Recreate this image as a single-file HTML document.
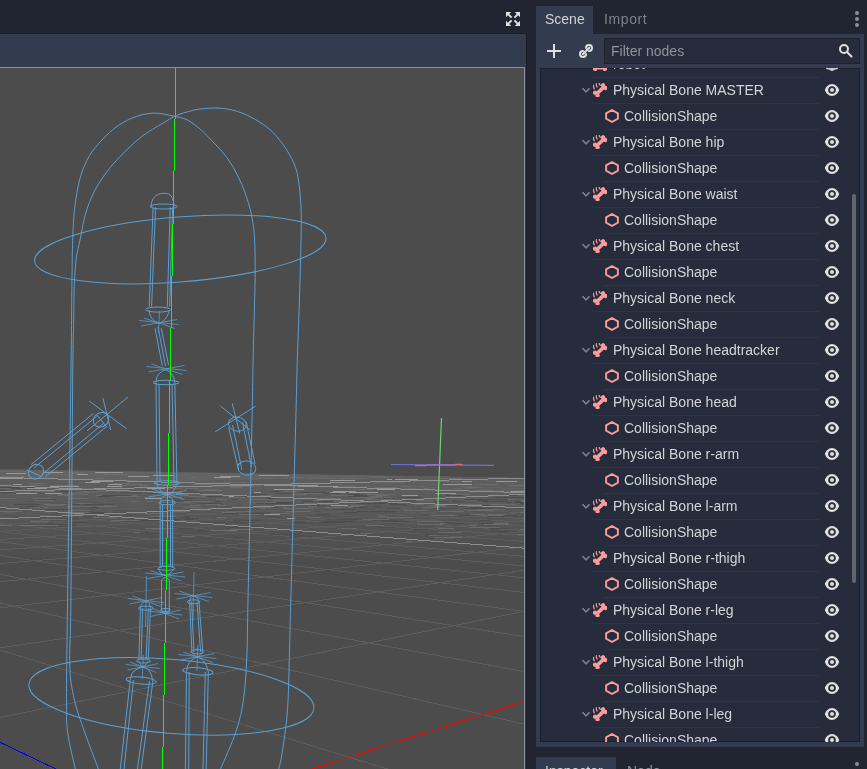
<!DOCTYPE html>
<html><head><meta charset="utf-8">
<style>
*{margin:0;padding:0;box-sizing:border-box}
html,body{width:867px;height:769px;overflow:hidden;background:#202531;font-family:"Liberation Sans",sans-serif;font-size:14px;color:#d2d4d8}
.abs{position:absolute;will-change:transform}
#vphead{position:absolute;left:0;top:34px;width:526px;height:34px;background:#333b4f}
#vp{position:absolute;left:0;top:67px;width:525px;height:702px;background:#4c4c4c;border-top:1px solid #8b919c;border-right:1px solid #8b919c}
#vpb{position:absolute;left:525px;top:34px;width:1px;height:735px;background:#333b4f}
#vpd{position:absolute;left:526px;top:34px;width:1px;height:735px;background:#1a1d28}
#dock{position:absolute;left:536px;top:34px;width:328px;height:713px;background:#333b4f}
#scenetab{position:absolute;left:536px;top:6px;width:57px;height:28px;background:#333b4f}
#filter{position:absolute;left:604px;top:38px;width:256px;height:26px;background:#262c3b;box-shadow:inset 0 0 0 1px #1e222c}
#tree{position:absolute;left:540px;top:68px;width:320px;height:674px;background:#262c3b;overflow:hidden;box-shadow:inset 0 0 0 1px #1c2029}
.row{position:absolute;left:0;width:320px;height:27px}
.row .t{position:absolute;top:0;line-height:26px;white-space:nowrap;will-change:transform}
.row svg{position:absolute}
.sep{position:absolute;height:1px;background:#2f3544}
#sb{position:absolute;left:852px;top:194px;width:4px;height:389px;border-radius:2px;background:#5f6571}
.dots i{position:absolute;width:4px;height:4px;border-radius:2px;background:#8b8e96}
</style></head><body>
<svg width="0" height="0" style="position:absolute">
<defs>
<g id="bone"><g fill="#fc9c9c" transform="translate(7.3 7.4) rotate(-43)"><rect x="-5.5" y="-1.75" width="11" height="3.5"/><circle cx="-5.5" cy="-1.9" r="2.1"/><circle cx="-5.5" cy="1.9" r="2.1"/><circle cx="5.5" cy="-1.9" r="2.1"/><circle cx="5.5" cy="1.9" r="2.1"/></g><path fill="none" stroke="#fc9c9c" stroke-width="1.25" stroke-linecap="round" d="M0.5 2.3 Q0.3 3.9 1.2 5.6 M3.3 0.7 Q3.1 2.4 4.1 4 M6.2 0.3 Q6.2 1.4 7.2 2.3"/></g><path fill="none" stroke="#fc9c9c" stroke-width="1.3" stroke-linecap="round" d="M0.6 2.4 Q0.4 4 1.5 6 M3.4 0.8 Q3.2 2.6 4.4 4.4 M6.3 0.4 Q6.3 1.6 7.6 2.6"/></g><path fill="none" stroke="#fc9c9c" stroke-width="1.2" stroke-linecap="round" d="M0.7 2.6 Q0.9 4.5 1.6 5.8 M3.6 1.1 Q3.8 3 4.6 4.3 M6.6 0.4 Q6.9 1.8 7.7 2.8"/></g>
<g id="hex"><path fill="none" stroke="#fc9c9c" stroke-width="1.9" stroke-linejoin="round" d="M7 1 L12.9 4.4 L12.9 9.6 L7 13 L1.1 9.6 L1.1 4.4 Z"/></g>
<g id="eye"><path fill="#e0e0e0" fill-rule="evenodd" d="M7 0 C10.6 0 13.3 3.2 14.2 6 C13.3 8.8 10.6 12 7 12 C3.4 12 0.7 8.8 -0.2 6 C0.7 3.2 3.4 0 7 0Z M7 2.2 A3.8 3.8 0 1 0 7 9.8 A3.8 3.8 0 1 0 7 2.2Z"/><circle cx="7" cy="6" r="2" fill="#e0e0e0"/></g>
</defs></svg>

<!-- expand icon -->
<svg class="abs" style="left:505px;top:11px" width="16" height="16" viewBox="0 0 16 16">
<g fill="#e0e0e0"><path d="M1 1h5.2l-1.9 1.9 3 3-1.4 1.4-3-3L1 6.2z"/><path d="M15 1h-5.2l1.9 1.9-3 3 1.4 1.4 3-3L15 6.2z"/><path d="M1 15h5.2l-1.9-1.9 3-3-1.4-1.4-3 3L1 9.8z"/><path d="M15 15h-5.2l1.9-1.9-3-3 1.4-1.4 3 3L15 9.8z"/></g></svg>

<div id="vphead"></div><div class="abs" style="left:0;top:33px;width:526px;height:1px;background:#1a1d28"></div>
<div id="vp"></div><svg width="524" height="769" viewBox="0 0 524 769" style="position:absolute;left:0;top:0"><defs><clipPath id="vc"><rect x="0" y="68" width="524" height="701"/></clipPath><linearGradient id="band" gradientUnits="userSpaceOnUse" x1="0" y1="486.3" x2="0" y2="564.3"><stop offset="0" stop-color="#5c5c5c"/><stop offset="1" stop-color="#4c4c4c"/></linearGradient></defs><g clip-path="url(#vc)"><rect x="0" y="68" width="524" height="701" fill="#4c4c4c"/><path d="M0 469.3 L524 477.9 L524 769 L0 769Z" fill="url(#band)"/><path d="M0 469.3 L524 477.9 L524 494.9 L0 486.3Z" fill="#636363"/><path d="M0 650L387.6 769M0 602.9L524 724.1M0 574.4L524 671.6M0 555.4L524 636.5M0 541.7L524 611.4M0 531.5L524 592.5M0 523.5L524 577.7M0 517.1L524 565.9M0 511.8L524 556.3M0 503.8L524 541.4M0 500.6L524 535.5M0 497.8L524 530.5M0 495.4L524 526M0 493.3L524 522.1M0 491.4L524 518.6M0 489.7L524 515.5M0 488.2L524 512.7M0 486.8L524 510.1M0 484.4L524 505.7M0 483.3L524 503.8M0 482.4L524 502M0 481.5L524 500.3M0 480.7L524 498.8M0 479.9L524 497.4M0 479.2L524 496.1M0 478.5L524 494.9M0 477.9L524 493.7M0 717.5L524 611.4M0 647.9L524 570.3M0 607.8L524 546.7M0 581.7L524 531.4M0 563.5L524 520.6M0 549.9L524 512.6M0 539.5L524 506.5M0 531.2L524 501.6M0 524.5L524 497.6M0 514.2L524 491.6M0 510.2L524 489.2M0 506.7L524 487.2M0 503.7L524 485.4M0 501L524 483.8M0 498.6L524 482.4M0 496.5L524 481.2M0 494.6L524 480M0 492.9L524 479M0 489.9L507.6 477.7M0 488.6L487.9 477.4M0 487.5L468.8 477M0 486.4L450.3 476.7M0 485.3L432.5 476.4" stroke="#5d5d5d" stroke-width="1" fill="none" shape-rendering="crispEdges"/><path d="M0 487.5h20M26 487.5h29M11 488.5h11M67 489.5h26M0 490.5h6M85 490.5h12M146 490.5h14M168 490.5h12M181 490.5h12M60 491.5h15M271 491.5h9M0 492.5h15M120 492.5h23M183 492.5h17M300 492.5h25M145 493.5h13M176 493.5h27M275 493.5h18M324 493.5h16M250 494.5h17M348 494.5h12M102 495.5h29M354 495.5h13M446 495.5h17M498 495.5h20M97 496.5h14M207 496.5h16M242 496.5h6M348 496.5h20M283 497.5h8M397 497.5h25M494 497.5h30M167 498.5h27M266 498.5h9M377 498.5h18M38 499.5h18M232 499.5h5M464 499.5h20M486 499.5h21M169 500.5h23M406 500.5h10M477 500.5h11M159 501.5h22M215 501.5h6M302 501.5h12M319 501.5h14M434 501.5h7M442 501.5h7M452 501.5h13M483 501.5h25M515 501.5h6M277 502.5h17M379 502.5h17M507 502.5h5M514 502.5h25M161 503.5h17M200 503.5h22M256 503.5h8M265 503.5h26M356 503.5h29M389 503.5h8M520 503.5h8M14 504.5h26M73 504.5h7M84 504.5h30M390 504.5h16M310 505.5h16M447 505.5h11M482 505.5h10M25 506.5h14M375 506.5h6M458 506.5h8M89 507.5h10M273 507.5h6M353 507.5h15M469 507.5h13M0 508.5h29M248 508.5h5M387 508.5h14M433 508.5h25M465 508.5h30M497 508.5h26M44 509.5h27M162 509.5h8M332 509.5h23M157 510.5h14M228 510.5h18M315 511.5h5M357 511.5h11M369 511.5h27M92 512.5h14M113 512.5h18M344 512.5h13M81 513.5h27M223 513.5h11M242 513.5h28M316 514.5h13M125 515.5h7M423 515.5h5M459 515.5h15M505 515.5h13M521 515.5h29M38 516.5h28M266 516.5h13M487 516.5h19M513 516.5h9M18 517.5h28M84 517.5h7M153 517.5h23M180 517.5h10M56 518.5h23M186 518.5h13M67 519.5h6M158 519.5h12M172 519.5h7M184 519.5h9M336 519.5h22M141 520.5h20M163 520.5h9M233 520.5h27M373 520.5h24M479 520.5h12M123 521.5h9M324 521.5h30M382 521.5h27M68 522.5h18M204 522.5h21M231 522.5h24M294 522.5h20M319 522.5h26M448 523.5h16M478 523.5h15M523 523.5h11M46 524.5h30M166 524.5h11M239 526.5h22M229 527.5h27M378 527.5h16M177 528.5h16M489 528.5h16M413 529.5h16M196 530.5h11M489 531.5h28M501 532.5h7M142 533.5h26M269 534.5h27M425 534.5h19M290 536.5h22M227 537.5h17" stroke="#4d4d4d" stroke-width="1"/><path d="M0 471.5h28M67 472.5h15M72 473.5h14M89 473.5h21M45 474.5h25M104 474.5h25M0 476.5h25M190 477.5h8M285 477.5h16M369 477.5h20M93 478.5h11M257 478.5h17M307 478.5h29M339 478.5h28M439 478.5h23M92 480.5h21M118 480.5h19M438 481.5h22M223 482.5h26M375 482.5h30M29 483.5h15M113 483.5h17M125 484.5h18M191 484.5h20M475 484.5h24M30 485.5h13M49 485.5h28M119 485.5h8M139 485.5h10M209 485.5h21M233 485.5h29M508 485.5h21M212 486.5h13M230 486.5h24M290 486.5h10M338 486.5h17M401 486.5h10M418 486.5h6M230 487.5h12M374 487.5h23M465 487.5h17M0 488.5h11M80 488.5h25M168 488.5h14M185 488.5h13M404 488.5h12M424 488.5h5M455 488.5h6M204 489.5h15M349 489.5h24M105 490.5h9M198 490.5h24M473 490.5h21M522 490.5h13M35 491.5h19M83 491.5h26M115 491.5h24M139 491.5h11M152 491.5h6M285 491.5h12M19 492.5h12M69 492.5h21M165 492.5h17M501 492.5h24M301 493.5h20M58 494.5h30M203 494.5h6M210 494.5h6M291 494.5h16M366 494.5h29M451 494.5h19M57 495.5h12M96 495.5h6M132 495.5h5M202 495.5h22M260 495.5h13M331 495.5h22M375 495.5h14M116 496.5h24M189 496.5h16M370 496.5h13M466 496.5h25M144 497.5h23M167 497.5h15M228 497.5h17M356 497.5h19M375 497.5h18M452 497.5h12M0 498.5h15M33 498.5h18M69 498.5h20M300 498.5h14M315 498.5h27M364 498.5h9M216 499.5h11M249 499.5h20M367 499.5h27M508 499.5h5M35 500.5h19M273 500.5h22M313 500.5h9M416 500.5h17M520 500.5h20M131 501.5h8M147 501.5h6M184 501.5h26M333 501.5h15M522 501.5h22M161 502.5h30M249 502.5h27M355 502.5h18M77 503.5h15M304 503.5h23M44 504.5h22M206 504.5h14M320 504.5h12M415 504.5h9M460 504.5h22M490 504.5h26M46 505.5h18M104 505.5h7M190 505.5h10M218 505.5h8M351 505.5h13M427 505.5h18M67 506.5h26M96 506.5h22M308 506.5h9M344 506.5h15M434 506.5h13M468 506.5h23M33 507.5h7M43 507.5h5M183 507.5h19M249 507.5h22M282 507.5h5M324 507.5h19M348 507.5h5M422 507.5h16M208 508.5h6M260 508.5h6M284 508.5h30M478 509.5h27M70 510.5h20M404 510.5h24M467 510.5h27M0 511.5h22M146 511.5h6M154 511.5h12M173 511.5h17M226 511.5h24M286 511.5h25M440 511.5h24M63 512.5h26M222 512.5h13M520 512.5h26M66 513.5h7M145 513.5h21M270 513.5h20M75 514.5h23M239 514.5h22M470 514.5h14M488 514.5h17M431 515.5h24M482 515.5h21M150 516.5h26M378 516.5h8M93 517.5h24M135 517.5h9M217 517.5h10M307 517.5h14M387 517.5h27M523 518.5h26M41 519.5h25M363 519.5h26M111 520.5h28M30 521.5h19M417 521.5h25M440 523.5h5M494 523.5h15M417 524.5h26M484 524.5h24M0 525.5h12M19 525.5h24M43 525.5h16M366 525.5h18M469 525.5h7M470 527.5h30M145 528.5h27M342 528.5h15M438 528.5h16M230 529.5h23M520 529.5h12M211 530.5h26M134 532.5h6M438 532.5h23M361 533.5h11M517 534.5h22M429 535.5h8M182 536.5h12M434 537.5h28M406 541.5h6" stroke="#6b6b6b" stroke-width="1"/><path d="M43 472.5h20M95 472.5h28M6 473.5h20M77 474.5h11M153 475.5h21M259 475.5h30M128 476.5h21M220 476.5h20M214 477.5h17M0 478.5h23M73 479.5h5M387 479.5h5M395 479.5h23M330 480.5h25M91 481.5h22M462 481.5h10M496 481.5h21M85 482.5h15M13 484.5h9M108 484.5h14M443 484.5h29M294 485.5h24M50 486.5h29M107 486.5h15M308 486.5h30M27 488.5h20M147 488.5h18M274 489.5h30M377 489.5h18M435 490.5h18M333 491.5h23M511 491.5h20M254 492.5h7M330 492.5h16M349 492.5h29M16 493.5h21M45 493.5h17M436 493.5h20M402 495.5h16M229 496.5h5M145 498.5h17M331 505.5h17M264 514.5h16M287 518.5h8" stroke="#999" stroke-width="1"/><path d="M0 507.5L524 548.2M0 485.5L524 507.8M0 477.3L524 492.6M0 518.9L524 494.3M0 491.4L524 478.1" stroke="#8e8e8e" stroke-width="1" fill="none" shape-rendering="crispEdges"/><path d="M310 769.5 L525 701" stroke="#f00" stroke-width="1" fill="none" shape-rendering="crispEdges"/><path d="M0 742.3 L57 769.5" stroke="#00f" stroke-width="1" fill="none" shape-rendering="crispEdges"/><g stroke="#5b9fd3" stroke-width="1" fill="none"><path d="M75.3 769C74 762.8 69.1 743.9 67.6 731.9C66.1 719.9 66.5 718.7 66.5 696.7C66.5 674.7 66.8 654.5 67.6 600C68.3 545.5 70.3 422.6 71 370C71.7 317.4 71.6 306.3 71.9 284.6C72.2 262.9 72.2 252.6 72.7 240C73.2 227.4 73.4 219.5 74.6 209.2C75.8 198.9 77.6 187.1 80 178.3C82.4 169.5 85.4 162.8 89.1 156.4C92.8 150 97 145.2 101.9 140C106.8 134.8 112.5 129.4 118.3 125.5C124.1 121.6 130.4 118.5 136.5 116.4C142.6 114.3 148.6 113.2 154.7 113.1C160.8 113 167.4 114.8 172.9 116C178.4 117.2 182.9 117.8 187.4 120C191.9 122.2 196.5 126.2 200 129C203.5 131.8 203.8 132.2 208.2 136.9C212.6 141.6 221.2 149.9 226.4 156.9C231.6 163.9 235.5 171.1 239.2 178.7C242.8 186.3 246 195.1 248.3 202.4C250.6 209.7 251.8 216.1 252.8 222.4C253.9 228.7 254.2 232.1 254.6 240C255 247.9 255.2 258.7 255.2 270C255.2 281.3 254.8 293 254.4 308C254.1 323 253.5 339.7 253.1 360C252.7 380.3 252.7 390 251.8 430C251 470 248.8 562.5 248 600C247.2 637.5 247.6 638.4 246.9 654.9C246.2 671.4 245.4 686 243.6 698.8C241.8 711.6 239.8 720.1 235.9 731.8C232.1 743.5 223.1 762.8 220.5 769 M98.4 769C95.8 762.1 87 739.2 83 727.5C79 715.8 76.4 709.2 74.2 699C72 688.8 70.3 682.5 69.8 666C69.2 649.5 70.4 649.3 70.9 600C71.4 550.7 72.3 416.5 72.8 370C73.3 323.5 73.5 335.2 73.7 321C74 306.8 73.8 295.2 74.3 284.6C74.8 274 75.5 264.7 76.4 257.3C77.4 249.9 78.5 247.2 80 240C81.5 232.8 83.2 222 85.5 214C87.8 206 90.6 198.8 94 192C97.4 185.2 101.4 179.2 106 173C110.6 166.8 115.5 161.1 121.5 155C127.5 148.9 135.2 141.6 141.9 136.4C148.7 131.2 156.2 127.2 162 123.7C167.8 120.2 171.8 117.6 176.5 115.5C181.2 113.4 185.9 112.3 190 111.2C194.1 110.1 196.1 109.4 200.9 108.9C205.8 108.4 213 107.7 219.1 108.1C225.2 108.5 231.2 109.5 237.3 111.4C243.4 113.3 249.7 116.3 255.5 119.6C261.3 122.9 266.7 126.4 271.9 131.4C277.1 136.4 282.6 143.5 286.5 149.6C290.4 155.7 293.5 161.7 295.6 167.8C297.7 173.9 298.3 179.3 299.2 186C300.1 192.7 300.7 200.6 301 207.9C301.3 215.2 301.4 217.7 301.2 230C301 242.3 300.6 260.3 300 282C299.4 303.7 298.1 335.3 297.3 360C296.6 384.7 296.6 390 295.5 430C294.4 470 291.8 564.4 290.8 600C289.8 635.6 290.2 625.6 289.7 643.9C289.1 662.2 288.8 691.5 287.5 709.8C286.2 728.1 283.5 743.8 282 753.7C280.5 763.6 279.2 766.5 278.7 769 M151 207C151.2 205.8 151.5 202 152.5 200C153.5 198 155.1 196.1 157 195C158.9 193.9 161.8 193.3 164 193.3C166.2 193.3 168.5 193.9 170 195C171.5 196.1 172.3 198 173 200C173.7 202 173.8 205.8 174 207 M153.1 207.3 L149.2 306.7 M155.5 207.3 L151.6 306.7 M172.6 207.3 L169.7 306.7 M170.2 207.3 L167.3 306.7 M149.2 310C149.5 311.2 149.4 314.8 151 317C152.6 319.2 156.5 323.1 159 323.3C161.5 323.5 164.2 320.2 166 318C167.8 315.8 169.1 311.3 169.7 310 M155 328.3 L162.3 365.8 M161.3 328.3 L168.5 364.8 M158 327 L165.5 366 M156 382.5C156.3 381.2 156.4 377.1 158 375C159.6 372.9 163 370 165.4 370C167.8 370 170.9 372.9 172.5 375C174.1 377.1 174.4 381.2 174.8 382.5 M156 382.5 L157 482.9 M174.8 382.5 L176.9 482.9 M159 384 L160 481 M172 384 L174 481 M157 483C157.5 484.2 158.2 488.1 160 490C161.8 491.9 165.2 494.4 167.5 494.4C169.8 494.4 172.4 491.9 174 490C175.6 488.1 176.4 484.2 176.9 483 M160.2 502C160.5 501.2 160.9 498.6 162 497.5C163.1 496.4 165 495.4 166.5 495.4C168 495.4 169.8 496.4 171 497.5C172.2 498.6 173.3 501.2 173.8 502 M160.2 502 L160.2 568 M172.7 502 L172.7 568 M162.5 504 L162.5 566 M170.5 504 L170.5 566 M158 568.5C158.5 569.2 159.8 571.8 161 573C162.2 574.2 163.9 575.6 165.4 575.6C166.9 575.6 168.4 574.2 170 573C171.6 571.8 174 569.2 174.8 568.5 M161.5 581C161.8 580.6 162.3 579 163 578.5C163.7 578 164.6 577.7 165.4 577.7C166.2 577.7 167.3 578 168 578.5C168.7 579 169.1 580.6 169.3 581 M161.5 581 L161.5 610 M169.3 581 L169.3 610 M161.5 610C161.8 610.4 162.3 611.9 163 612.5C163.7 613.1 164.6 613.5 165.4 613.5C166.2 613.5 167.3 613.1 168 612.5C168.7 611.9 169.1 610.4 169.3 610 M140.4 608.1C140.7 607.3 141.1 604.5 142 603.5C142.9 602.5 144.7 601.8 145.9 601.8C147.1 601.8 148.2 602.5 149 603.5C149.8 604.5 150.3 607.3 150.6 608.1 M140.4 608.1 L138.9 659.6 M150.6 608.1 L148.2 659.6 M142.6 608.1 L141.1 659.6 M148.4 608.1 L146 659.6 M138.9 661C139.2 661.6 139.8 663.6 140.5 664.5C141.2 665.4 141.9 666.6 142.8 666.6C143.7 666.6 145.1 665.4 146 664.5C146.9 663.6 147.8 661.6 148.2 661 M130.3 679.9C130.8 678.6 130.9 674.1 133 672C135.1 669.9 140 667.4 142.8 667.4C145.6 667.4 148.3 669.7 150 672C151.7 674.3 152.4 679.8 152.9 681.4 M130.3 679.9 L120.3 769 M152.9 681.4 L141.2 769 M133.5 680 L124 769 M149.5 681 L137.5 769 M189.6 601.8C189.8 601.1 190.3 598.5 191 597.5C191.7 596.5 192.5 595.6 193.5 595.6C194.5 595.6 196.1 596.5 197 597.5C197.9 598.5 198.7 601.1 199 601.8 M189.6 601.8 L191.9 651.8 M199 601.8 L202.8 651.8 M191.6 601.8 L193.9 651.8 M197 601.8 L200.6 651.8 M191.9 652C192.2 652.5 193.1 654.2 194 655C194.9 655.8 196.3 656.5 197.4 656.5C198.5 656.5 199.6 655.8 200.5 655C201.4 654.2 202.4 652.5 202.8 652 M186.5 672C186.9 670.5 187.2 665.5 189 663C190.8 660.5 194.7 657.2 197.4 657.2C200.1 657.2 203.2 660.5 205 663C206.8 665.5 207.8 670.5 208.3 672 M186.5 672 L185.4 769 M208.3 672 L206.2 769 M189.2 672 L188.7 769 M205.3 672 L203 769 M31 464.7 L93.4 413.5 M45 477.2 L107.2 426 M34 468 L96.5 416.5 M42 474.5 L104 423 M27 470 L40 476 M96 414 L106 426 M89.2 401 L126.6 428.8 M128 397 L87.1 430.8 M103 398.3 L110.7 430 M228.7 427.7 L238.6 469.9 M246.2 421.9 L255 464 M232.5 425 L242 470 M242.5 422.5 L251.5 467 M220.5 406.1 L250.3 430.1 M215.2 431.8 L255.6 406.1 M232.2 403.2 L239.8 433.6"/><ellipse cx="180.3" cy="249.4" rx="146.2" ry="32.5" transform="rotate(-4.55 180.3 249.4)"/><ellipse cx="171.4" cy="696.3" rx="143" ry="37" transform="rotate(4.8 171.4 696.3)"/><ellipse cx="163.8" cy="206.5" rx="13.7" ry="2.5" transform="rotate(0 163.8 206.5)"/><ellipse cx="158" cy="309.6" rx="12.7" ry="2.5" transform="rotate(0 158 309.6)"/><ellipse cx="166" cy="382.5" rx="13" ry="2.2" transform="rotate(0 166 382.5)"/><ellipse cx="167" cy="482.9" rx="13" ry="2.2" transform="rotate(0 167 482.9)"/><ellipse cx="167.4" cy="502.7" rx="8.4" ry="2" transform="rotate(0 167.4 502.7)"/><ellipse cx="166.4" cy="568.3" rx="8.4" ry="2" transform="rotate(0 166.4 568.3)"/><ellipse cx="165.4" cy="610" rx="5" ry="1.5" transform="rotate(0 165.4 610)"/><ellipse cx="145.9" cy="608.1" rx="7.5" ry="2" transform="rotate(0 145.9 608.1)"/><ellipse cx="143.5" cy="661" rx="7" ry="2" transform="rotate(0 143.5 661)"/><ellipse cx="141.2" cy="680.5" rx="15" ry="3.5" transform="rotate(6 141.2 680.5)"/><ellipse cx="193.5" cy="601.8" rx="6.3" ry="2" transform="rotate(0 193.5 601.8)"/><ellipse cx="197.3" cy="651.8" rx="6.5" ry="2" transform="rotate(0 197.3 651.8)"/><ellipse cx="197.8" cy="671.3" rx="15.2" ry="3.5" transform="rotate(5 197.8 671.3)"/><ellipse cx="36" cy="471.7" rx="8" ry="7" transform="rotate(-35 36 471.7)"/><ellipse cx="101" cy="419.8" rx="8" ry="7" transform="rotate(-35 101 419.8)"/><ellipse cx="237.4" cy="424.2" rx="9" ry="7" transform="rotate(10 237.4 424.2)"/><ellipse cx="246.8" cy="468" rx="9" ry="7" transform="rotate(10 246.8 468)"/><path stroke-opacity="0.75" d="M139 320.5 L179 324.5 M141 326 L177 319.5 M144 318 L175 328.5 M159.5 311 L158.5 333 M146.5 366.5 L186.5 370.5 M148.5 372 L184.5 365.5 M151.5 364 L182.5 374.5 M146.5 491.5 L188.5 495.5 M148.6 497 L186.4 490.5 M151.8 489 L184.3 499.5 M145.4 573 L185.4 577 M147.4 578.5 L183.4 572 M150.4 570.5 L181.4 581 M148.4 611 L182.4 615 M150.1 616.5 L180.7 610 M152.7 608.5 L179 619 M128 598.5 L164 602.5 M129.8 604 L162.2 597.5 M132.5 596 L160.4 606.5 M146.5 576 L145.5 627 M125.8 664.5 L159.8 668.5 M127.5 670 L158.1 663.5 M130.1 662 L156.4 672.5 M143.3 655 L142.3 679 M174.5 593.5 L212.5 597.5 M176.4 599 L210.6 592.5 M179.2 591 L208.7 601.5 M194 572 L193 620 M178.4 654.5 L216.4 658.5 M180.3 660 L214.5 653.5 M183.2 652 L212.6 662.5 M197.9 645 L196.9 671"/></g><path d="M176 67 L162.6 769" stroke="#0f0" stroke-width="1" fill="none" shape-rendering="crispEdges"/><path d="M441.5 418 L437.7 510" stroke="#6ad66a" stroke-width="1.2" fill="none"/><path d="M391 464.5 L494 465.4" stroke="#7070e0" stroke-width="1.2" fill="none"/><path d="M426.5 465 L455 465" stroke="#a878d8" stroke-width="1.2" fill="none"/><path d="M415 465.6 L426.5 465.6 M455 464.4 L462.5 464.4" stroke="#e06a6a" stroke-width="1.2" fill="none"/></g></svg><div id="vpb"></div><div id="vpd"></div>

<div id="scenetab"></div>
<div class="abs" style="left:545px;top:5px;line-height:28px">Scene</div>
<div class="abs" style="left:604px;top:5px;line-height:28px;color:#7f828a;letter-spacing:0.6px">Import</div>
<div class="dots"><i style="left:855px;top:11px"></i><i style="left:855px;top:17px"></i><i style="left:855px;top:23px"></i></div>
<div id="dock"></div>
<svg class="abs" style="left:546px;top:43px" width="16" height="16" viewBox="0 0 16 16"><path d="M8 1v14M1 8h14" stroke="#e0e0e0" stroke-width="2"/></svg>
<svg class="abs" style="left:576px;top:41px" width="20" height="20" viewBox="0 0 20 20"><g fill="none" stroke="#e0e0e0" stroke-width="2" stroke-linecap="round"><path d="M10 7 A3 3 0 1 1 13 10"/><path d="M10 13 A3 3 0 1 1 7 10"/><path d="M6.8 13.2 L13.2 6.8"/></g></svg>
<div id="filter"></div>
<div class="abs" style="left:611px;top:38px;line-height:26px;color:#8f929a">Filter nodes</div>
<svg class="abs" style="left:838px;top:43px" width="16" height="16" viewBox="0 0 16 16"><circle cx="6" cy="6" r="4" fill="none" stroke="#e0e0e0" stroke-width="2"/><path d="M9 9l4.5 4.5" stroke="#e0e0e0" stroke-width="2" stroke-linecap="round"/></svg>
<div id="tree"><div class="row" style="top:-17px"><svg class="ic" style="left:53px;top:13px" width="14" height="8" viewBox="0 0 14 8"><path fill="#fc9c9c" d="M0 0H14V5.2Q14 7 12.3 7H11.2Q10 7 10 5.8V5.5H4V5.8Q4 7 2.8 7H1.7Q0 7 0 5.2Z"/></svg><span class="t" style="left:73px">robot</span><svg class="ic" style="left:286px;top:17px" width="12" height="6" viewBox="0 0 12 6"><path fill="#c8c8c8" d="M0 0H12V0.9Q9.5 1.1 7.3 2.4Q6.5 3.2 6 3.2Q5.5 3.2 4.7 2.4Q2.5 1.1 0 0.9Z"/></svg><div class="sep" style="left:52px;top:26px;width:227px"></div></div><div class="row" style="top:9px"><svg class="arr" style="left:41px;top:10px" width="10" height="8" viewBox="0 0 10 8"><path d="M1.5 1.3 L5 4.8 L8.5 1.3" fill="none" stroke="#7d8089" stroke-width="1.6"/></svg><svg class="ic" style="left:53px;top:6px" width="14" height="14" viewBox="0 0 14 14"><use href="#bone"/></svg><span class="t" style="left:73px">Physical Bone MASTER</span><svg class="ic" style="left:285px;top:7px" width="14" height="12" overflow="visible" viewBox="0 0 14 12"><use href="#eye"/></svg><div class="sep" style="left:52px;top:26px;width:227px"></div></div><div class="row" style="top:35px"><svg class="ic" style="left:65px;top:6px" width="14" height="14" viewBox="0 0 14 14"><use href="#hex"/></svg><span class="t" style="left:84px">CollisionShape</span><svg class="ic" style="left:285px;top:7px" width="14" height="12" overflow="visible" viewBox="0 0 14 12"><use href="#eye"/></svg><div class="sep" style="left:64px;top:26px;width:215px"></div></div><div class="row" style="top:61px"><svg class="arr" style="left:41px;top:10px" width="10" height="8" viewBox="0 0 10 8"><path d="M1.5 1.3 L5 4.8 L8.5 1.3" fill="none" stroke="#7d8089" stroke-width="1.6"/></svg><svg class="ic" style="left:53px;top:6px" width="14" height="14" viewBox="0 0 14 14"><use href="#bone"/></svg><span class="t" style="left:73px">Physical Bone hip</span><svg class="ic" style="left:285px;top:7px" width="14" height="12" overflow="visible" viewBox="0 0 14 12"><use href="#eye"/></svg><div class="sep" style="left:52px;top:26px;width:227px"></div></div><div class="row" style="top:87px"><svg class="ic" style="left:65px;top:6px" width="14" height="14" viewBox="0 0 14 14"><use href="#hex"/></svg><span class="t" style="left:84px">CollisionShape</span><svg class="ic" style="left:285px;top:7px" width="14" height="12" overflow="visible" viewBox="0 0 14 12"><use href="#eye"/></svg><div class="sep" style="left:64px;top:26px;width:215px"></div></div><div class="row" style="top:113px"><svg class="arr" style="left:41px;top:10px" width="10" height="8" viewBox="0 0 10 8"><path d="M1.5 1.3 L5 4.8 L8.5 1.3" fill="none" stroke="#7d8089" stroke-width="1.6"/></svg><svg class="ic" style="left:53px;top:6px" width="14" height="14" viewBox="0 0 14 14"><use href="#bone"/></svg><span class="t" style="left:73px">Physical Bone waist</span><svg class="ic" style="left:285px;top:7px" width="14" height="12" overflow="visible" viewBox="0 0 14 12"><use href="#eye"/></svg><div class="sep" style="left:52px;top:26px;width:227px"></div></div><div class="row" style="top:139px"><svg class="ic" style="left:65px;top:6px" width="14" height="14" viewBox="0 0 14 14"><use href="#hex"/></svg><span class="t" style="left:84px">CollisionShape</span><svg class="ic" style="left:285px;top:7px" width="14" height="12" overflow="visible" viewBox="0 0 14 12"><use href="#eye"/></svg><div class="sep" style="left:64px;top:26px;width:215px"></div></div><div class="row" style="top:165px"><svg class="arr" style="left:41px;top:10px" width="10" height="8" viewBox="0 0 10 8"><path d="M1.5 1.3 L5 4.8 L8.5 1.3" fill="none" stroke="#7d8089" stroke-width="1.6"/></svg><svg class="ic" style="left:53px;top:6px" width="14" height="14" viewBox="0 0 14 14"><use href="#bone"/></svg><span class="t" style="left:73px">Physical Bone chest</span><svg class="ic" style="left:285px;top:7px" width="14" height="12" overflow="visible" viewBox="0 0 14 12"><use href="#eye"/></svg><div class="sep" style="left:52px;top:26px;width:227px"></div></div><div class="row" style="top:191px"><svg class="ic" style="left:65px;top:6px" width="14" height="14" viewBox="0 0 14 14"><use href="#hex"/></svg><span class="t" style="left:84px">CollisionShape</span><svg class="ic" style="left:285px;top:7px" width="14" height="12" overflow="visible" viewBox="0 0 14 12"><use href="#eye"/></svg><div class="sep" style="left:64px;top:26px;width:215px"></div></div><div class="row" style="top:217px"><svg class="arr" style="left:41px;top:10px" width="10" height="8" viewBox="0 0 10 8"><path d="M1.5 1.3 L5 4.8 L8.5 1.3" fill="none" stroke="#7d8089" stroke-width="1.6"/></svg><svg class="ic" style="left:53px;top:6px" width="14" height="14" viewBox="0 0 14 14"><use href="#bone"/></svg><span class="t" style="left:73px">Physical Bone neck</span><svg class="ic" style="left:285px;top:7px" width="14" height="12" overflow="visible" viewBox="0 0 14 12"><use href="#eye"/></svg><div class="sep" style="left:52px;top:26px;width:227px"></div></div><div class="row" style="top:243px"><svg class="ic" style="left:65px;top:6px" width="14" height="14" viewBox="0 0 14 14"><use href="#hex"/></svg><span class="t" style="left:84px">CollisionShape</span><svg class="ic" style="left:285px;top:7px" width="14" height="12" overflow="visible" viewBox="0 0 14 12"><use href="#eye"/></svg><div class="sep" style="left:64px;top:26px;width:215px"></div></div><div class="row" style="top:269px"><svg class="arr" style="left:41px;top:10px" width="10" height="8" viewBox="0 0 10 8"><path d="M1.5 1.3 L5 4.8 L8.5 1.3" fill="none" stroke="#7d8089" stroke-width="1.6"/></svg><svg class="ic" style="left:53px;top:6px" width="14" height="14" viewBox="0 0 14 14"><use href="#bone"/></svg><span class="t" style="left:73px">Physical Bone headtracker</span><svg class="ic" style="left:285px;top:7px" width="14" height="12" overflow="visible" viewBox="0 0 14 12"><use href="#eye"/></svg><div class="sep" style="left:52px;top:26px;width:227px"></div></div><div class="row" style="top:295px"><svg class="ic" style="left:65px;top:6px" width="14" height="14" viewBox="0 0 14 14"><use href="#hex"/></svg><span class="t" style="left:84px">CollisionShape</span><svg class="ic" style="left:285px;top:7px" width="14" height="12" overflow="visible" viewBox="0 0 14 12"><use href="#eye"/></svg><div class="sep" style="left:64px;top:26px;width:215px"></div></div><div class="row" style="top:321px"><svg class="arr" style="left:41px;top:10px" width="10" height="8" viewBox="0 0 10 8"><path d="M1.5 1.3 L5 4.8 L8.5 1.3" fill="none" stroke="#7d8089" stroke-width="1.6"/></svg><svg class="ic" style="left:53px;top:6px" width="14" height="14" viewBox="0 0 14 14"><use href="#bone"/></svg><span class="t" style="left:73px">Physical Bone head</span><svg class="ic" style="left:285px;top:7px" width="14" height="12" overflow="visible" viewBox="0 0 14 12"><use href="#eye"/></svg><div class="sep" style="left:52px;top:26px;width:227px"></div></div><div class="row" style="top:347px"><svg class="ic" style="left:65px;top:6px" width="14" height="14" viewBox="0 0 14 14"><use href="#hex"/></svg><span class="t" style="left:84px">CollisionShape</span><svg class="ic" style="left:285px;top:7px" width="14" height="12" overflow="visible" viewBox="0 0 14 12"><use href="#eye"/></svg><div class="sep" style="left:64px;top:26px;width:215px"></div></div><div class="row" style="top:373px"><svg class="arr" style="left:41px;top:10px" width="10" height="8" viewBox="0 0 10 8"><path d="M1.5 1.3 L5 4.8 L8.5 1.3" fill="none" stroke="#7d8089" stroke-width="1.6"/></svg><svg class="ic" style="left:53px;top:6px" width="14" height="14" viewBox="0 0 14 14"><use href="#bone"/></svg><span class="t" style="left:73px">Physical Bone r-arm</span><svg class="ic" style="left:285px;top:7px" width="14" height="12" overflow="visible" viewBox="0 0 14 12"><use href="#eye"/></svg><div class="sep" style="left:52px;top:26px;width:227px"></div></div><div class="row" style="top:399px"><svg class="ic" style="left:65px;top:6px" width="14" height="14" viewBox="0 0 14 14"><use href="#hex"/></svg><span class="t" style="left:84px">CollisionShape</span><svg class="ic" style="left:285px;top:7px" width="14" height="12" overflow="visible" viewBox="0 0 14 12"><use href="#eye"/></svg><div class="sep" style="left:64px;top:26px;width:215px"></div></div><div class="row" style="top:425px"><svg class="arr" style="left:41px;top:10px" width="10" height="8" viewBox="0 0 10 8"><path d="M1.5 1.3 L5 4.8 L8.5 1.3" fill="none" stroke="#7d8089" stroke-width="1.6"/></svg><svg class="ic" style="left:53px;top:6px" width="14" height="14" viewBox="0 0 14 14"><use href="#bone"/></svg><span class="t" style="left:73px">Physical Bone l-arm</span><svg class="ic" style="left:285px;top:7px" width="14" height="12" overflow="visible" viewBox="0 0 14 12"><use href="#eye"/></svg><div class="sep" style="left:52px;top:26px;width:227px"></div></div><div class="row" style="top:451px"><svg class="ic" style="left:65px;top:6px" width="14" height="14" viewBox="0 0 14 14"><use href="#hex"/></svg><span class="t" style="left:84px">CollisionShape</span><svg class="ic" style="left:285px;top:7px" width="14" height="12" overflow="visible" viewBox="0 0 14 12"><use href="#eye"/></svg><div class="sep" style="left:64px;top:26px;width:215px"></div></div><div class="row" style="top:477px"><svg class="arr" style="left:41px;top:10px" width="10" height="8" viewBox="0 0 10 8"><path d="M1.5 1.3 L5 4.8 L8.5 1.3" fill="none" stroke="#7d8089" stroke-width="1.6"/></svg><svg class="ic" style="left:53px;top:6px" width="14" height="14" viewBox="0 0 14 14"><use href="#bone"/></svg><span class="t" style="left:73px">Physical Bone r-thigh</span><svg class="ic" style="left:285px;top:7px" width="14" height="12" overflow="visible" viewBox="0 0 14 12"><use href="#eye"/></svg><div class="sep" style="left:52px;top:26px;width:227px"></div></div><div class="row" style="top:503px"><svg class="ic" style="left:65px;top:6px" width="14" height="14" viewBox="0 0 14 14"><use href="#hex"/></svg><span class="t" style="left:84px">CollisionShape</span><svg class="ic" style="left:285px;top:7px" width="14" height="12" overflow="visible" viewBox="0 0 14 12"><use href="#eye"/></svg><div class="sep" style="left:64px;top:26px;width:215px"></div></div><div class="row" style="top:529px"><svg class="arr" style="left:41px;top:10px" width="10" height="8" viewBox="0 0 10 8"><path d="M1.5 1.3 L5 4.8 L8.5 1.3" fill="none" stroke="#7d8089" stroke-width="1.6"/></svg><svg class="ic" style="left:53px;top:6px" width="14" height="14" viewBox="0 0 14 14"><use href="#bone"/></svg><span class="t" style="left:73px">Physical Bone r-leg</span><svg class="ic" style="left:285px;top:7px" width="14" height="12" overflow="visible" viewBox="0 0 14 12"><use href="#eye"/></svg><div class="sep" style="left:52px;top:26px;width:227px"></div></div><div class="row" style="top:555px"><svg class="ic" style="left:65px;top:6px" width="14" height="14" viewBox="0 0 14 14"><use href="#hex"/></svg><span class="t" style="left:84px">CollisionShape</span><svg class="ic" style="left:285px;top:7px" width="14" height="12" overflow="visible" viewBox="0 0 14 12"><use href="#eye"/></svg><div class="sep" style="left:64px;top:26px;width:215px"></div></div><div class="row" style="top:581px"><svg class="arr" style="left:41px;top:10px" width="10" height="8" viewBox="0 0 10 8"><path d="M1.5 1.3 L5 4.8 L8.5 1.3" fill="none" stroke="#7d8089" stroke-width="1.6"/></svg><svg class="ic" style="left:53px;top:6px" width="14" height="14" viewBox="0 0 14 14"><use href="#bone"/></svg><span class="t" style="left:73px">Physical Bone l-thigh</span><svg class="ic" style="left:285px;top:7px" width="14" height="12" overflow="visible" viewBox="0 0 14 12"><use href="#eye"/></svg><div class="sep" style="left:52px;top:26px;width:227px"></div></div><div class="row" style="top:607px"><svg class="ic" style="left:65px;top:6px" width="14" height="14" viewBox="0 0 14 14"><use href="#hex"/></svg><span class="t" style="left:84px">CollisionShape</span><svg class="ic" style="left:285px;top:7px" width="14" height="12" overflow="visible" viewBox="0 0 14 12"><use href="#eye"/></svg><div class="sep" style="left:64px;top:26px;width:215px"></div></div><div class="row" style="top:633px"><svg class="arr" style="left:41px;top:10px" width="10" height="8" viewBox="0 0 10 8"><path d="M1.5 1.3 L5 4.8 L8.5 1.3" fill="none" stroke="#7d8089" stroke-width="1.6"/></svg><svg class="ic" style="left:53px;top:6px" width="14" height="14" viewBox="0 0 14 14"><use href="#bone"/></svg><span class="t" style="left:73px">Physical Bone l-leg</span><svg class="ic" style="left:285px;top:7px" width="14" height="12" overflow="visible" viewBox="0 0 14 12"><use href="#eye"/></svg><div class="sep" style="left:52px;top:26px;width:227px"></div></div><div class="row" style="top:659px"><svg class="ic" style="left:65px;top:6px" width="14" height="14" viewBox="0 0 14 14"><use href="#hex"/></svg><span class="t" style="left:84px">CollisionShape</span><svg class="ic" style="left:285px;top:7px" width="14" height="12" overflow="visible" viewBox="0 0 14 12"><use href="#eye"/></svg><div class="sep" style="left:64px;top:26px;width:215px"></div></div></div>
<div id="sb"></div>

<div class="abs" style="left:536px;top:757px;width:80px;height:20px;background:#333b4f"></div>
<div class="abs" style="left:545px;top:757px;line-height:28px">Inspector</div>
<div class="abs" style="left:627px;top:757px;line-height:28px;color:#8f929a">Node</div>
<div class="dots"><i style="left:855px;top:762px"></i></div>
</body></html>
